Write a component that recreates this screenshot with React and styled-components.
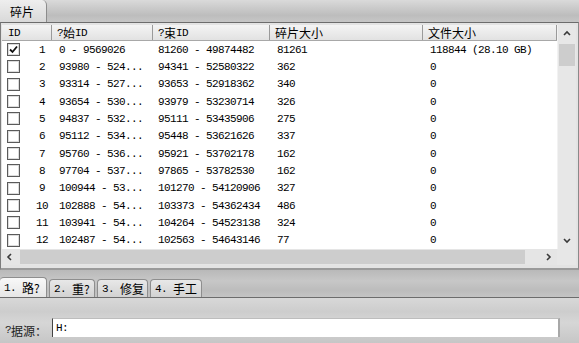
import React from "react";
import styled, { createGlobalStyle } from "styled-components";

const GlobalStyle = createGlobalStyle`
  html, body { margin: 0; padding: 0; width: 579px; height: 343px; overflow: hidden; background: #c8c8c8; }
  body { font-family: "Liberation Mono", "Noto Sans CJK SC", monospace; font-size: 11px; letter-spacing: -0.6px; color: #000; }
`;

const COLS = "50px 101px 117px 153px 134px";

const Window = styled.div`
  display: flex;
  flex-direction: column;
  width: 579px;
  height: 343px;
`;

const TopStrip = styled.div`
  height: 22px;
  flex: none;
  display: flex;
  background: linear-gradient(to bottom, #dadada 0%, #cbcbcb 35%, #bdbdbd 70%, #c6c6c6 100%);
`;

const Han = styled.span`
  font-family: "Noto Sans CJK SC", sans-serif;
  font-size: 12px;
  letter-spacing: 0;
  margin-left: ${(p) => p.$gap || 0}px;
`;

const TopTab = styled.div`
  width: 47px;
  box-sizing: border-box;
  padding-left: 10px;
  display: flex;
  align-items: center;
  background: linear-gradient(to bottom, #eeeeee, #d9d9d9);
  border-right: 1px solid #8c8c8c;
  border-top-right-radius: 5px;
`;

const Frame = styled.div`
  flex: none;
  display: grid;
  grid-template-columns: 555px 19px;
  grid-template-rows: 224px 16px;
  border-top: 1px solid #6c6c6c;
  border-left: 1px solid #7c7c7c;
  border-right: 1px solid #8a8a8a;
  border-bottom: 2px solid #9a9a9a;
  padding: 2px 2px 3px 1px;
  background: #e3e3e3;
`;

const Table = styled.div`
  background: #fff;
  overflow: hidden;
  display: flex;
  flex-direction: column;
`;

const HeaderRow = styled.div`
  display: grid;
  grid-template-columns: ${COLS};
  height: 16px;
  flex: none;
  background: linear-gradient(to bottom, #f4f4f4, #e2e2e2);
  border-bottom: 1px solid #a8a8a8;
  box-sizing: border-box;
`;

const HeaderCell = styled.div`
  display: flex;
  align-items: center;
  padding-left: ${(p) => p.$pad || 5}px;
  border-right: 1px solid #9a9a9a;
  white-space: nowrap;
  overflow: hidden;
`;

const Row = styled.div`
  display: grid;
  grid-template-columns: ${COLS};
  height: 17.33px;
  flex: none;
  align-items: center;
`;

const Cell = styled.div`
  padding-left: ${(p) => p.$pad || 6}px;
  white-space: pre;
  overflow: hidden;
`;

const IdCell = styled.div`
  display: flex;
  align-items: center;
  padding-left: 5px;
`;

const Check = styled.div`
  width: 13px;
  height: 13px;
  box-sizing: border-box;
  border: 1px solid #5a5a5a;
  box-shadow: inset 0 0 0 1px #dcdcdc;
  background: #fff;
  display: flex;
  align-items: center;
  justify-content: center;
`;

const RowNum = styled.span`
  width: 18px;
  margin-left: 13px;
  text-align: center;
`;

const VScroll = styled.div`
  display: flex;
  flex-direction: column;
  background: #e7e7e7;
  border-left: 1px solid #f2f2f2;
`;

const ArrowBtn = styled.div`
  flex: none;
  width: ${(p) => p.$w || 18}px;
  height: ${(p) => p.$h || 17}px;
  display: flex;
  align-items: center;
  justify-content: center;
`;

const VThumb = styled.div`
  flex: none;
  height: 22px;
  margin: 2px 1px 0 1px;
  background: #cdcdcd;
`;

const Filler = styled.div`
  flex: 1;
`;

const HScroll = styled.div`
  display: flex;
  align-items: stretch;
  background: #e5e5e5;
`;

const HThumb = styled.div`
  width: 505px;
  margin: 1px 0 1px 2px;
  background: #cdcdcd;
`;

const Corner = styled.div`
  background: #e7e7e7;
`;

const TabStrip = styled.div`
  height: 27px;
  flex: none;
  display: flex;
  align-items: flex-end;
  gap: 2px;
  background: linear-gradient(to bottom, #b9b9b9 0%, #c7c7c7 40%, #bcbcbc 75%, #c4c4c4 100%);
`;

const Tab = styled.div`
  width: ${(p) => p.$w}px;
  height: ${(p) => (p.$active ? 20 : 18)}px;
  box-sizing: border-box;
  padding-left: 4px;
  display: flex;
  align-items: center;
  white-space: pre;
  background: ${(p) => (p.$active ? "linear-gradient(to bottom, #f8f8f8, #e6e6e6)" : "linear-gradient(to bottom, #e8e8e8, #d2d2d2)")};
  border: 1px solid #8e8e8e;
  border-bottom: none;
  border-left: ${(p) => (p.$active ? "none" : "1px solid #8e8e8e")};
  border-radius: 4px 4px 0 0;
`;

const SourcePanel = styled.div`
  flex: 1;
  border-top: 1px solid #6c6c6c;
  background: linear-gradient(to bottom, #d8d8d8 0%, #cdcdcd 30%, #d6d6d6 55%, #c6c6c6 100%);
  display: flex;
  align-items: flex-start;
  padding-top: 20px;
`;

const Label = styled.div`
  width: 52px;
  padding-left: 5px;
  height: 21px;
  display: flex;
  align-items: center;
  padding-top: 3px;
  box-sizing: border-box;
  color: #222;
`;

const Input = styled.div`
  width: 508px;
  height: 19px;
  box-sizing: border-box;
  background: #fff;
  border-left: 1px solid #444;
  border-top: 1px solid #bdbdbd;
  border-right: 2px solid #a8a8a8;
  padding-left: 3px;
  display: flex;
  align-items: center;
`;

const Chevron = ({ dir }) => {
  const pts = {
    up: "1,5 4,2 7,5",
    down: "1,2 4,5 7,2",
    left: "5,1 2,4 5,7",
    right: "2,1 5,4 2,7",
  }[dir];
  return (
    <svg width="8" height="8" viewBox="0 0 8 8">
      <polyline points={pts} fill="none" stroke="#3a3a3a" strokeWidth="1.6" />
    </svg>
  );
};

const CheckMark = () => (
  <svg width="9" height="9" viewBox="0 0 9 9">
    <polyline points="1,4.5 3.5,7 8,1.5" fill="none" stroke="#111" strokeWidth="1.8" />
  </svg>
);

const rows = [
  [1, "0 - 9569026", "81260 - 49874482", "81261", "118844 (28.10 GB)", true],
  [2, "93980 - 524...", "94341 - 52580322", "362", "0"],
  [3, "93314 - 527...", "93653 - 52918362", "340", "0"],
  [4, "93654 - 530...", "93979 - 53230714", "326", "0"],
  [5, "94837 - 532...", "95111 - 53435906", "275", "0"],
  [6, "95112 - 534...", "95448 - 53621626", "337", "0"],
  [7, "95760 - 536...", "95921 - 53702178", "162", "0"],
  [8, "97704 - 537...", "97865 - 53782530", "162", "0"],
  [9, "100944 - 53...", "101270 - 54120906", "327", "0"],
  [10, "102888 - 54...", "103373 - 54362434", "486", "0"],
  [11, "103941 - 54...", "104264 - 54523138", "324", "0"],
  [12, "102487 - 54...", "102563 - 54643146", "77", "0"],
];

const tabs = [
  { w: 47, num: "1.", name: "路?", active: true },
  { w: 46, num: "2.", name: "重?" },
  { w: 51, num: "3.", name: "修复" },
  { w: 52, num: "4.", name: "手工" },
];

export default function App() {
  return (
    <Window>
      <GlobalStyle />
      <TopStrip>
        <TopTab>
          <Han>碎片</Han>
        </TopTab>
      </TopStrip>
      <Frame>
        <Table>
          <HeaderRow>
            <HeaderCell $pad={6}>ID</HeaderCell>
            <HeaderCell>?<Han>始</Han>ID</HeaderCell>
            <HeaderCell>?<Han>束</Han>ID</HeaderCell>
            <HeaderCell><Han>碎片大小</Han></HeaderCell>
            <HeaderCell><Han>文件大小</Han></HeaderCell>
          </HeaderRow>
          {rows.map(([n, a, b, c, d, checked]) => (
            <Row key={n}>
              <IdCell>
                <Check>{checked && <CheckMark />}</Check>
                <RowNum>{n}</RowNum>
              </IdCell>
              <Cell $pad={7}>{a}</Cell>
              <Cell $pad={5}>{b}</Cell>
              <Cell $pad={7}>{c}</Cell>
              <Cell $pad={7}>{d}</Cell>
            </Row>
          ))}
        </Table>
        <VScroll>
          <ArrowBtn><Chevron dir="up" /></ArrowBtn>
          <VThumb />
          <Filler />
          <ArrowBtn><Chevron dir="down" /></ArrowBtn>
        </VScroll>
        <HScroll>
          <ArrowBtn $w={16} $h={16}><Chevron dir="left" /></ArrowBtn>
          <HThumb />
          <Filler />
          <ArrowBtn $w={16} $h={16}><Chevron dir="right" /></ArrowBtn>
        </HScroll>
        <Corner />
      </Frame>
      <TabStrip>
        {tabs.map((t) => (
          <Tab key={t.num} $w={t.w} $active={t.active}>
            {t.num}
            <Han $gap={6}>{t.name}</Han>
          </Tab>
        ))}
      </TabStrip>
      <SourcePanel>
        <Label>?<Han>据源：</Han></Label>
        <Input>H:</Input>
      </SourcePanel>
    </Window>
  );
}
